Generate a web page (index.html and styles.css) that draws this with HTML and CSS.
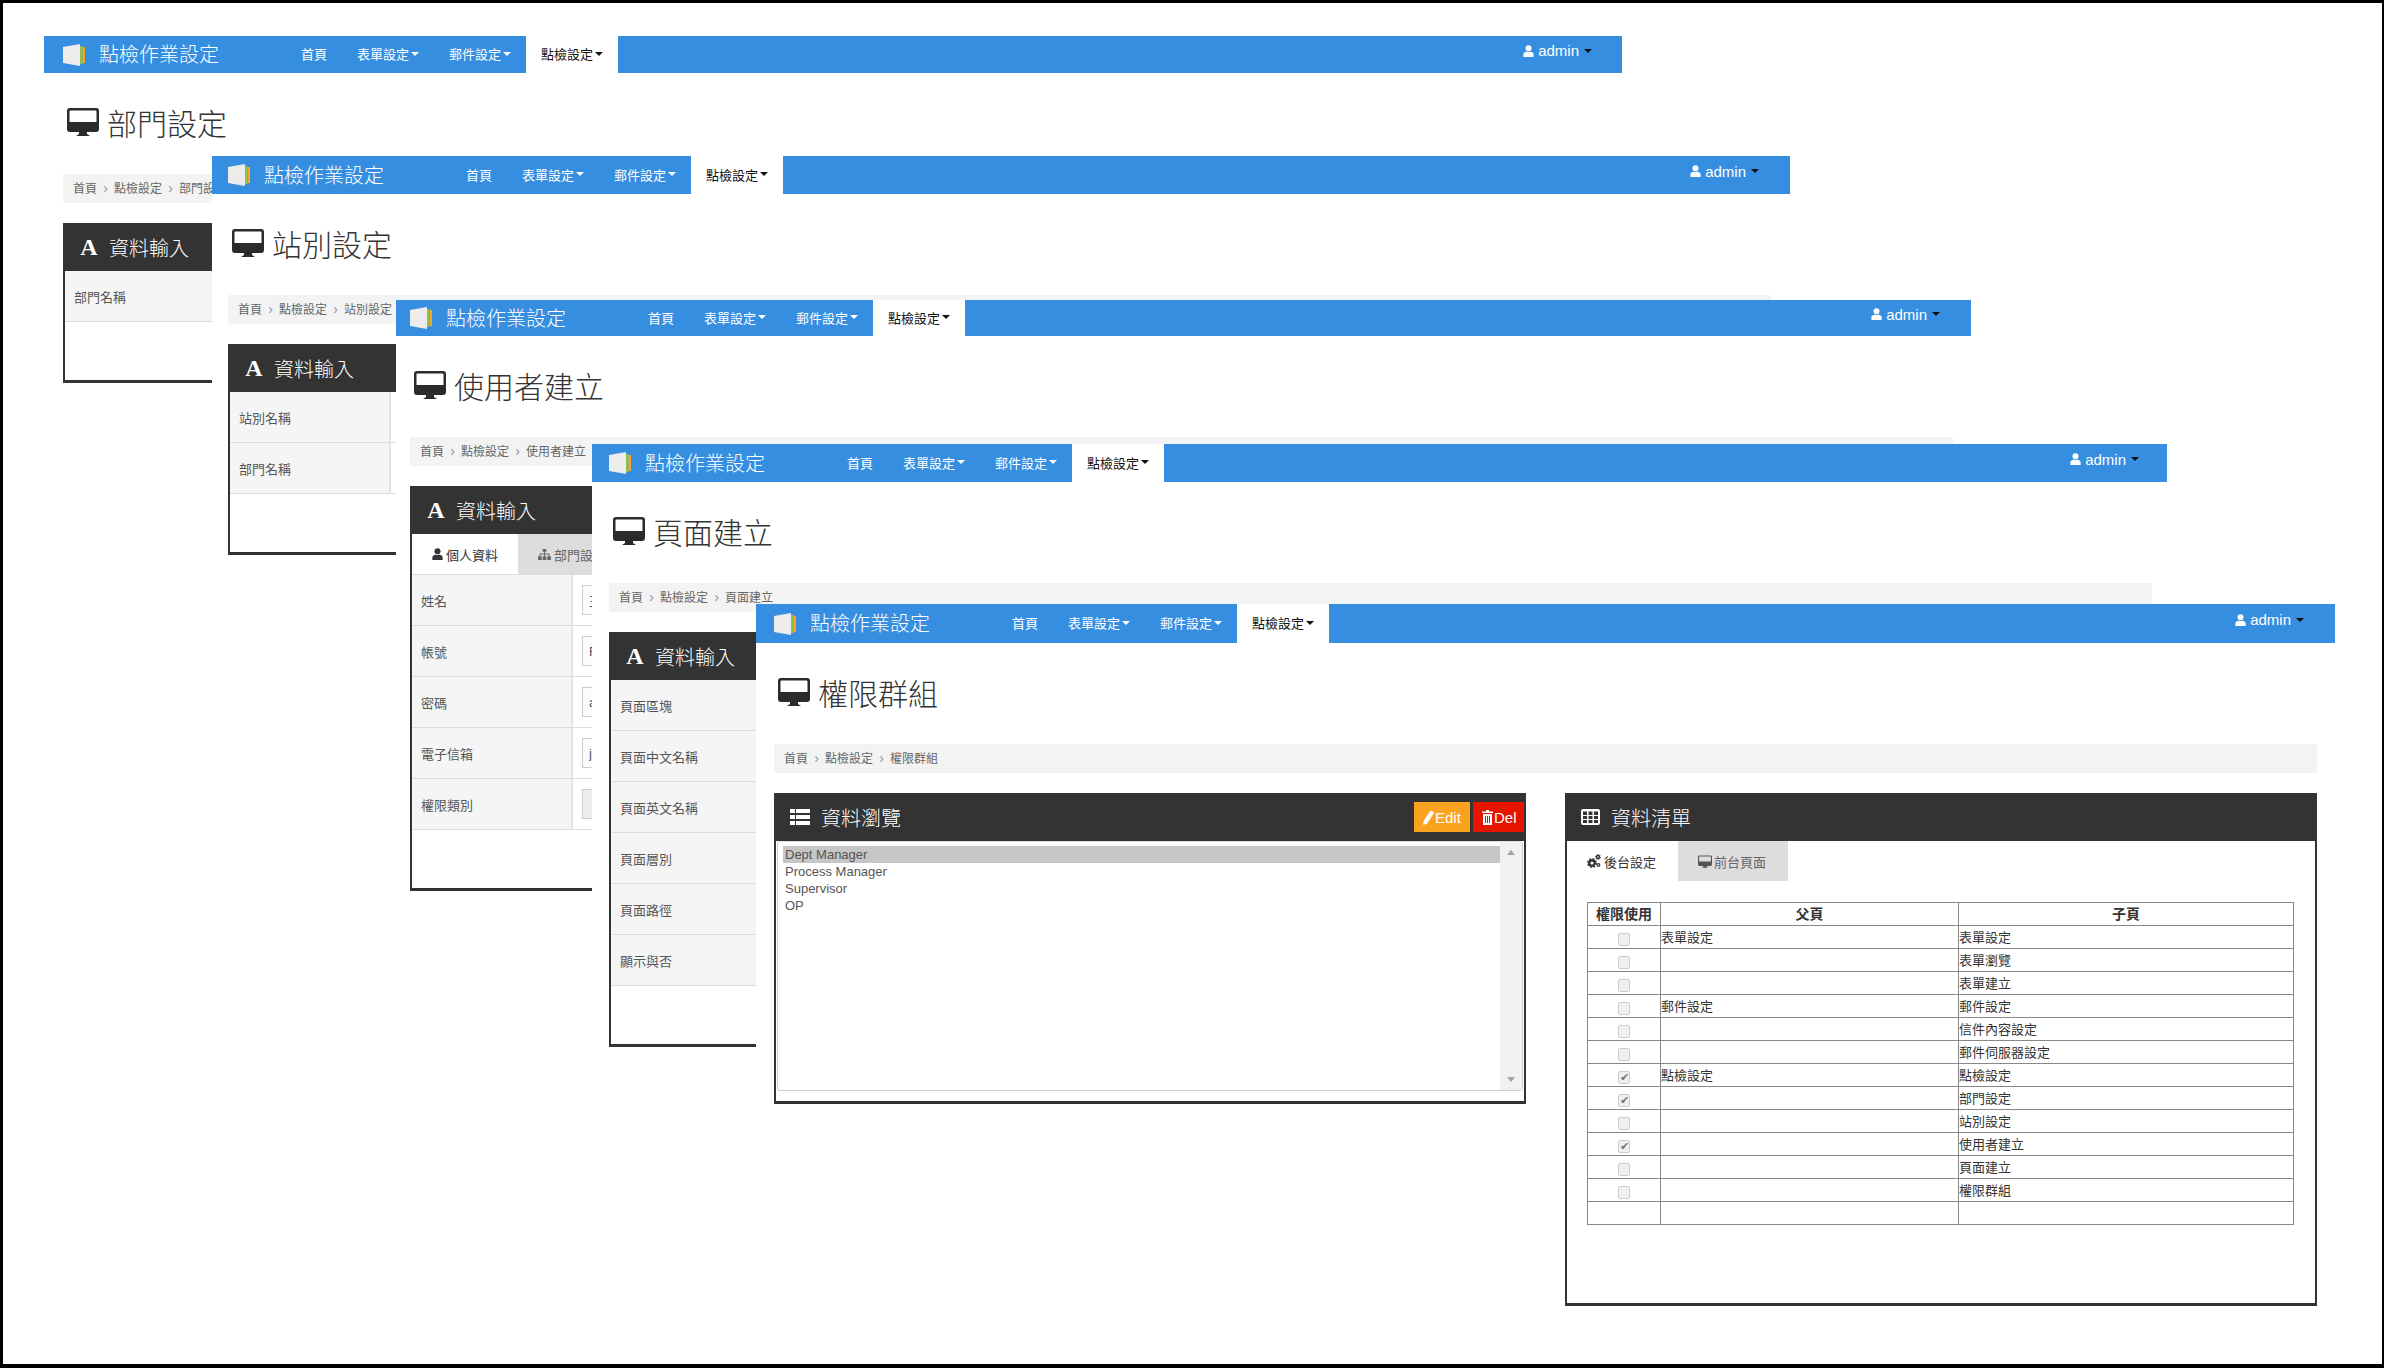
FILE: index.html
```html
<!DOCTYPE html>
<html lang="zh-Hant">
<head>
  <meta charset="UTF-8">
  <meta name="viewport" content="width=device-width, initial-scale=1.0">
  <title>點檢作業設定</title>
  <link rel="stylesheet" href="styles.css">
</head>
<body>
  <svg class="sprite" xmlns="http://www.w3.org/2000/svg">
    <symbol id="i-logo" viewBox="0 0 22 22">
      <polygon points="0,3 17,0 17,22 0,19" fill="#ececec"/>
      <rect x="17" y="2" width="2.6" height="18" fill="#8bc34a"/>
      <rect x="19.6" y="3" width="2.4" height="16" fill="#f5a623"/>
    </symbol>
    <symbol id="i-monitor" viewBox="0 0 32 28">
      <path fill="currentColor" fill-rule="evenodd" d="M3 0h26a3 3 0 0 1 3 3v18a3 3 0 0 1-3 3H20v2l3 2H9l3-2v-2H3a3 3 0 0 1-3-3V3a3 3 0 0 1 3-3zM3.500 2.500a1 1 0 0 0-1 1V14h27V3.500a1 1 0 0 0-1-1z"/>
    </symbol>
    <symbol id="i-list" viewBox="0 0 20 16">
      <path fill="currentColor" d="M0 0h5v4H0zM6 0h14v4H6zM0 6h5v4H0zM6 6h14v4H6zM0 12h5v4H0zM6 12h14v4H6z"/>
    </symbol>
    <symbol id="i-grid" viewBox="0 0 19 16">
      <path fill="currentColor" fill-rule="evenodd" d="M2 0h15a2 2 0 0 1 2 2v12a2 2 0 0 1-2 2H2a2 2 0 0 1-2-2V2a2 2 0 0 1 2-2zM2 2.500V6h4V2.500zM7.500 2.500V6h4V2.500zM13 2.500V6h4V2.500zM2 7v3h4V7zM7.500 7v3h4V7zM13 7v3h4V7zM2 11v3h4v-3zM7.500 11v3h4v-3zM13 11v3h4v-3z"/>
    </symbol>
    <symbol id="i-user" viewBox="0 0 12 14">
      <circle cx="6" cy="3.800" r="3.500" fill="currentColor"/>
      <path fill="currentColor" d="M0 14v-3c0-2 2-3 4-3.500 1 1 3 1 4 0 2 .5 4 1.500 4 3.500v3z"/>
    </symbol>
    <symbol id="i-sitemap" viewBox="0 0 14 12">
      <path fill="currentColor" d="M5 0h4v3H5zM6.500 3h1v2h5v3h-1V6h-4v2h-1V6h-4v2h-1V5h5zM0 8h4v4H0zM5 8h4v4H5zM10 8h4v4h-4z"/>
    </symbol>
    <symbol id="i-cogs" viewBox="0 0 14 14">
      <circle cx="5" cy="9" r="2.800" fill="none" stroke="currentColor" stroke-width="2.400"/>
      <circle cx="5" cy="9" r="4.300" fill="none" stroke="currentColor" stroke-width="1.400" stroke-dasharray="1.700 1.700"/>
      <circle cx="11" cy="3" r="1.500" fill="none" stroke="currentColor" stroke-width="1.400"/>
      <circle cx="11" cy="3" r="2.500" fill="none" stroke="currentColor" stroke-width="1" stroke-dasharray="1.300 1.300"/>
      <circle cx="11.500" cy="11" r="1.300" fill="none" stroke="currentColor" stroke-width="1.200"/>
    </symbol>
    <symbol id="i-pencil" viewBox="0 0 12 16">
      <path fill="currentColor" d="M0 16l1-5L8 1a1.500 1.500 0 0 1 2 0l1.500 1a1.500 1.500 0 0 1 0 2L4 15z"/>
    </symbol>
    <symbol id="i-trash" viewBox="0 0 11 15">
      <path fill="currentColor" fill-rule="evenodd" d="M4 0h3v1.500h4V3H0V1.500h4zM1 4h9v11H1zM3 6v7h1V6zM5 6v7h1V6zM7 6v7h1V6z"/>
    </symbol>
  </svg>

  <div class="desk">

    <!-- 部門設定 -->
    <section class="win w1">
      <nav class="nav">
        <svg class="logo"><use href="#i-logo"/></svg>
        <span class="brand">點檢作業設定</span>
        <ul class="menu">
          <li>首頁</li>
          <li>表單設定<i class="caret"></i></li>
          <li>郵件設定<i class="caret"></i></li>
          <li class="active">點檢設定<i class="caret"></i></li>
        </ul>
        <span class="admin"><svg class="i-user"><use href="#i-user"/></svg>admin<i class="caret"></i></span>
      </nav>
      <h1 class="title"><svg class="i-monitor"><use href="#i-monitor"/></svg>部門設定</h1>
      <div class="crumb"><span>首頁</span><b>›</b><span>點檢設定</span><b>›</b><span>部門設定</span></div>
      <div class="panels">
        <div class="panel">
          <div class="panel-head"><span class="glyph">A</span>資料輸入</div>
          <div class="row"><label>部門名稱</label><div class="cell"></div></div>
        </div>
      </div>
    </section>

    <!-- 站別設定 -->
    <section class="win w2">
      <nav class="nav">
        <svg class="logo"><use href="#i-logo"/></svg>
        <span class="brand">點檢作業設定</span>
        <ul class="menu">
          <li>首頁</li>
          <li>表單設定<i class="caret"></i></li>
          <li>郵件設定<i class="caret"></i></li>
          <li class="active">點檢設定<i class="caret"></i></li>
        </ul>
        <span class="admin"><svg class="i-user"><use href="#i-user"/></svg>admin<i class="caret"></i></span>
      </nav>
      <h1 class="title"><svg class="i-monitor"><use href="#i-monitor"/></svg>站別設定</h1>
      <div class="crumb"><span>首頁</span><b>›</b><span>點檢設定</span><b>›</b><span>站別設定</span></div>
      <div class="panels">
        <div class="panel">
          <div class="panel-head"><span class="glyph">A</span>資料輸入</div>
          <div class="row"><label>站別名稱</label><div class="cell"></div></div>
          <div class="row"><label>部門名稱</label><div class="cell"></div></div>
        </div>
      </div>
    </section>

    <!-- 使用者建立 -->
    <section class="win w3">
      <nav class="nav">
        <svg class="logo"><use href="#i-logo"/></svg>
        <span class="brand">點檢作業設定</span>
        <ul class="menu">
          <li>首頁</li>
          <li>表單設定<i class="caret"></i></li>
          <li>郵件設定<i class="caret"></i></li>
          <li class="active">點檢設定<i class="caret"></i></li>
        </ul>
        <span class="admin"><svg class="i-user"><use href="#i-user"/></svg>admin<i class="caret"></i></span>
      </nav>
      <h1 class="title"><svg class="i-monitor"><use href="#i-monitor"/></svg>使用者建立</h1>
      <div class="crumb"><span>首頁</span><b>›</b><span>點檢設定</span><b>›</b><span>使用者建立</span></div>
      <div class="panels">
        <div class="panel">
          <div class="panel-head"><span class="glyph">A</span>資料輸入</div>
          <div class="tabs">
            <div class="tab on"><svg class="i-tab-user"><use href="#i-user"/></svg>個人資料</div>
            <div class="tab"><svg class="i-sitemap"><use href="#i-sitemap"/></svg>部門設定</div>
          </div>
          <div class="row"><label>姓名</label><div class="cell"><input class="field" type="text" value="王大明"></div></div>
          <div class="row"><label>帳號</label><div class="cell"><input class="field" type="text" value="Frank"></div></div>
          <div class="row"><label>密碼</label><div class="cell"><input class="field" type="text" value="admin"></div></div>
          <div class="row"><label>電子信箱</label><div class="cell"><input class="field" type="text" value="jack@"></div></div>
          <div class="row"><label>權限類別</label><div class="cell"><input class="field off" type="text"></div></div>
        </div>
      </div>
    </section>

    <!-- 頁面建立 -->
    <section class="win w4">
      <nav class="nav">
        <svg class="logo"><use href="#i-logo"/></svg>
        <span class="brand">點檢作業設定</span>
        <ul class="menu">
          <li>首頁</li>
          <li>表單設定<i class="caret"></i></li>
          <li>郵件設定<i class="caret"></i></li>
          <li class="active">點檢設定<i class="caret"></i></li>
        </ul>
        <span class="admin"><svg class="i-user"><use href="#i-user"/></svg>admin<i class="caret"></i></span>
      </nav>
      <h1 class="title"><svg class="i-monitor"><use href="#i-monitor"/></svg>頁面建立</h1>
      <div class="crumb"><span>首頁</span><b>›</b><span>點檢設定</span><b>›</b><span>頁面建立</span></div>
      <div class="panels">
        <div class="panel">
          <div class="panel-head"><span class="glyph">A</span>資料輸入</div>
          <div class="row"><label>頁面區塊</label><div class="cell"></div></div>
          <div class="row"><label>頁面中文名稱</label><div class="cell"></div></div>
          <div class="row"><label>頁面英文名稱</label><div class="cell"></div></div>
          <div class="row"><label>頁面層別</label><div class="cell"></div></div>
          <div class="row"><label>頁面路徑</label><div class="cell"></div></div>
          <div class="row"><label>顯示與否</label><div class="cell"></div></div>
        </div>
      </div>
    </section>

    <!-- 權限群組 -->
    <section class="win w5">
      <nav class="nav">
        <svg class="logo"><use href="#i-logo"/></svg>
        <span class="brand">點檢作業設定</span>
        <ul class="menu">
          <li>首頁</li>
          <li>表單設定<i class="caret"></i></li>
          <li>郵件設定<i class="caret"></i></li>
          <li class="active">點檢設定<i class="caret"></i></li>
        </ul>
        <span class="admin"><svg class="i-user"><use href="#i-user"/></svg>admin<i class="caret"></i></span>
      </nav>
      <h1 class="title"><svg class="i-monitor"><use href="#i-monitor"/></svg>權限群組</h1>
      <div class="crumb"><span>首頁</span><b>›</b><span>點檢設定</span><b>›</b><span>權限群組</span></div>
      <div class="panels">
        <div class="panel">
          <div class="panel-head">
            <svg class="i-list"><use href="#i-list"/></svg>資料瀏覽
            <div class="btns">
              <span class="btn edit"><svg class="i-pencil"><use href="#i-pencil"/></svg>Edit</span>
              <span class="btn del"><svg class="i-trash"><use href="#i-trash"/></svg>Del</span>
            </div>
          </div>
          <div class="listbox">
            <ul class="opts">
              <li class="sel">Dept Manager</li>
              <li>Process Manager</li>
              <li>Supervisor</li>
              <li>OP</li>
            </ul>
            <div class="track"><i class="up"></i><i class="down"></i></div>
          </div>
        </div>

        <div class="panel tall">
          <div class="panel-head"><svg class="i-grid"><use href="#i-grid"/></svg>資料清單</div>
          <div class="tabs plain">
            <div class="tab on"><svg class="i-cogs"><use href="#i-cogs"/></svg>後台設定</div>
            <div class="tab"><svg class="i-tab-monitor"><use href="#i-monitor"/></svg>前台頁面</div>
          </div>
          <table class="perm">
            <thead>
              <tr><th class="c1">權限使用</th><th class="c2">父頁</th><th>子頁</th></tr>
            </thead>
            <tbody>
              <tr><td class="mid"><input class="cb" type="checkbox" disabled></td><td>表單設定</td><td>表單設定</td></tr>
              <tr><td class="mid"><input class="cb" type="checkbox" disabled></td><td></td><td>表單瀏覽</td></tr>
              <tr><td class="mid"><input class="cb" type="checkbox" disabled></td><td></td><td>表單建立</td></tr>
              <tr><td class="mid"><input class="cb" type="checkbox" disabled></td><td>郵件設定</td><td>郵件設定</td></tr>
              <tr><td class="mid"><input class="cb" type="checkbox" disabled></td><td></td><td>信件內容設定</td></tr>
              <tr><td class="mid"><input class="cb" type="checkbox" disabled></td><td></td><td>郵件伺服器設定</td></tr>
              <tr><td class="mid"><input class="cb" type="checkbox" disabled checked></td><td>點檢設定</td><td>點檢設定</td></tr>
              <tr><td class="mid"><input class="cb" type="checkbox" disabled checked></td><td></td><td>部門設定</td></tr>
              <tr><td class="mid"><input class="cb" type="checkbox" disabled></td><td></td><td>站別設定</td></tr>
              <tr><td class="mid"><input class="cb" type="checkbox" disabled checked></td><td></td><td>使用者建立</td></tr>
              <tr><td class="mid"><input class="cb" type="checkbox" disabled></td><td></td><td>頁面建立</td></tr>
              <tr><td class="mid"><input class="cb" type="checkbox" disabled></td><td></td><td>權限群組</td></tr>
              <tr><td></td><td></td><td></td></tr>
            </tbody>
          </table>
        </div>
      </div>
    </section>

  </div>
</body>
</html>
```

FILE: styles.css
```css
* {
  margin: 0;
  padding: 0;
  box-sizing: border-box;
}

html, body {
  background: #fff;
}

body {
  font-family: "Liberation Sans", "Noto Sans CJK TC", sans-serif;
  font-size: 13px;
  color: #333;
}

ul {
  list-style: none;
}

.sprite {
  display: none;
}

/* the frame round the whole collage */
.desk {
  position: relative;
  width: 2384px;
  height: 1368px;
  border: solid #000;
  border-width: 3px 2px 4px 3px;
  overflow: hidden;
}

/* windows sit on a free canvas, later ones cover earlier ones */
.win {
  position: absolute;
  background: #fff;
  overflow: hidden;
}

.w1 { left: 41px;  top: 33px;  width: 1578px; height: 1000px; --pad: 19px; --nav: 37px; --adm: 30px; }
.w2 { left: 209px; top: 153px; width: 1578px; height: 1000px; --pad: 16px; --nav: 38px; --adm: 31px; }
.w3 { left: 393px; top: 297px; width: 1575px; height: 1000px; --pad: 14px; --nav: 36px; --adm: 31px; }
.w4 { left: 589px; top: 441px; width: 1575px; height: 900px;  --pad: 17px; --nav: 38px; --adm: 28px; }
.w5 { left: 753px; top: 601px; width: 1579px; height: 755px;  --pad: 18px; --nav: 39px; --adm: 31px; }

/* top bar */
.nav {
  display: flex;
  align-items: center;
  height: var(--nav);
  background: #368ee0;
  color: #fff;
}

.logo {
  width: 22px;
  height: 22px;
  margin-left: var(--pad);
  flex: none;
}

.brand {
  margin-left: 14px;
  padding-bottom: 2px;
  font-size: 20px;
  font-weight: 300;
  white-space: nowrap;
}

.menu {
  display: flex;
  align-self: stretch;
  margin-left: 67px;
}

.menu li {
  display: flex;
  align-items: center;
  padding: 0 15px 2px;
  white-space: nowrap;
}

.menu .active {
  background: #fff;
  color: #111;
}

.caret {
  display: inline-block;
  margin-left: 2px;
  border-top: 4px solid currentColor;
  border-left: 4px solid transparent;
  border-right: 4px solid transparent;
}

.admin {
  display: flex;
  align-items: center;
  margin-left: auto;
  margin-right: var(--adm);
  padding-bottom: 8px;
  font-size: 15px;
}

.admin .caret {
  margin-left: 5px;
  color: #111;
}

.i-user {
  width: 11px;
  height: 12px;
  margin-right: 4px;
}

/* page title */
.title {
  display: flex;
  align-items: flex-start;
  height: 101px;
  margin-left: var(--pad);
  padding: 32px 0 0 4px;
  font-size: 30px;
  font-weight: 300;
  line-height: 40px;
  color: #333;
}

.i-monitor {
  width: 32px;
  height: 28px;
  margin: 3px 8px 0 0;
  color: #2b2b2b;
  flex: none;
}

/* breadcrumb */
.crumb {
  display: flex;
  align-items: center;
  width: 1543px;
  height: 29px;
  margin-left: var(--pad);
  padding: 0 0 2px 10px;
  background: #f3f3f3;
  font-size: 12px;
  color: #666;
  white-space: nowrap;
}

.crumb b {
  width: 17px;
  text-align: center;
  font-weight: 400;
  font-size: 14px;
  color: #8a97a5;
}

/* panels */
.panels {
  display: flex;
  align-items: flex-start;
  gap: 39px;
  width: 1543px;
  margin: 20px 0 0 var(--pad);
}

.panel {
  width: 752px;
  border: solid #333;
  border-width: 0 2px 3px;
  flex: none;
}

.w1 .panel { height: 160px; }
.w2 .panel { height: 211px; }
.w3 .panel { height: 405px; }
.w4 .panel { height: 415px; }
.w5 .panel { height: 311px; }
.w5 .panel.tall { height: 513px; }

.panel-head {
  display: flex;
  align-items: center;
  height: 48px;
  margin: 0 -2px;
  padding-left: 16px;
  background: #333;
  color: #fff;
  font-size: 20px;
  font-weight: 300;
  white-space: nowrap;
}

.glyph {
  width: 20px;
  margin-right: 10px;
  font-family: "Liberation Serif", serif;
  font-size: 24px;
  font-weight: 700;
  text-align: center;
}

.i-list {
  width: 20px;
  height: 16px;
  margin-right: 11px;
}

.i-grid {
  width: 19px;
  height: 16px;
  margin-right: 11px;
}

.btns {
  display: flex;
  gap: 3px;
  margin-left: auto;
  margin-right: 2px;
}

.btn {
  display: flex;
  align-items: center;
  height: 30px;
  padding-left: 9px;
  font-size: 15px;
  font-weight: 400;
}

.edit {
  width: 56px;
  background: #f9a31f;
}

.del {
  width: 51px;
  background: #e71500;
}

.i-pencil {
  width: 11px;
  height: 15px;
  margin-right: 1px;
}

.i-trash {
  width: 11px;
  height: 15px;
  margin-right: 1px;
}

/* form rows */
.row {
  display: flex;
  height: 51px;
  border-bottom: 1px solid #ddd;
}

.row label {
  display: flex;
  align-items: center;
  width: 161px;
  padding-left: 9px;
  background: #f5f5f5;
  border-right: 2px solid #e4e4e4;
  color: #555;
  flex: none;
}

.cell {
  display: flex;
  align-items: center;
  flex: 1;
  padding-left: 9px;
}

.field {
  width: 300px;
  height: 30px;
  padding-left: 6px;
  border: 1px solid #ccc;
  background: #fbfbfb;
  font: inherit;
  color: #555;
}

.field.off {
  background: #eee;
}

/* tabs */
.tabs {
  display: flex;
  height: 41px;
  border-bottom: 1px solid #ddd;
}

.tabs.plain {
  height: 40px;
  border-bottom: 0;
}

.tab {
  display: flex;
  align-items: center;
  padding: 0 20px;
  background: #ddd;
  color: #666;
  white-space: nowrap;
}

.plain .tab {
  padding-right: 22px;
}

.tab.on {
  background: #fff;
  color: #333;
}

.i-tab-user {
  width: 11px;
  height: 12px;
  margin-right: 3px;
}

.i-sitemap {
  width: 13px;
  height: 11px;
  margin-right: 3px;
}

.i-cogs {
  width: 14px;
  height: 14px;
  margin-right: 3px;
}

.i-tab-monitor {
  width: 14px;
  height: 13px;
  margin-right: 2px;
  color: #555;
}

/* list box */
.listbox {
  display: flex;
  height: 250px;
  margin: 0 1px;
  border: 1px solid #ccc;
  border-top-color: #ddd;
  border-radius: 3px;
}

.opts {
  flex: 1;
  padding: 4px 0 0 5px;
  color: #555;
}

.opts li {
  height: 17px;
  padding-left: 2px;
  line-height: 17px;
}

.opts .sel {
  background: #c6c6c6;
}

.track {
  display: flex;
  flex-direction: column;
  justify-content: space-between;
  align-items: center;
  width: 22px;
  padding: 8px 0;
  background: #f1f1f1;
}

.up {
  border-bottom: 5px solid #a3a3a3;
  border-left: 4px solid transparent;
  border-right: 4px solid transparent;
}

.down {
  border-top: 5px solid #a3a3a3;
  border-left: 4px solid transparent;
  border-right: 4px solid transparent;
}

/* permission table */
.perm {
  width: 707px;
  margin: 21px 0 0 20px;
  border-collapse: collapse;
  table-layout: fixed;
}

.perm th,
.perm td {
  height: 23px;
  padding: 0;
  border: 1px solid #888;
  font-size: 13px;
  line-height: 15px;
  color: #333;
  text-align: left;
}

.perm th {
  font-size: 14px;
  text-align: center;
  font-weight: 700;
}

.perm .c1 { width: 73px; }
.perm .c2 { width: 298px; }

.perm .mid {
  text-align: center;
}

.cb {
  appearance: none;
  position: relative;
  display: inline-block;
  width: 12px;
  height: 13px;
  margin-top: 5px;
  border: 1px solid #ccc;
  border-radius: 2px;
  background: #efefef;
  vertical-align: top;
}

.cb:checked::after {
  content: "✔";
  position: absolute;
  left: 1px;
  top: -1px;
  font-size: 11px;
  line-height: 13px;
  color: #777;
}
```
